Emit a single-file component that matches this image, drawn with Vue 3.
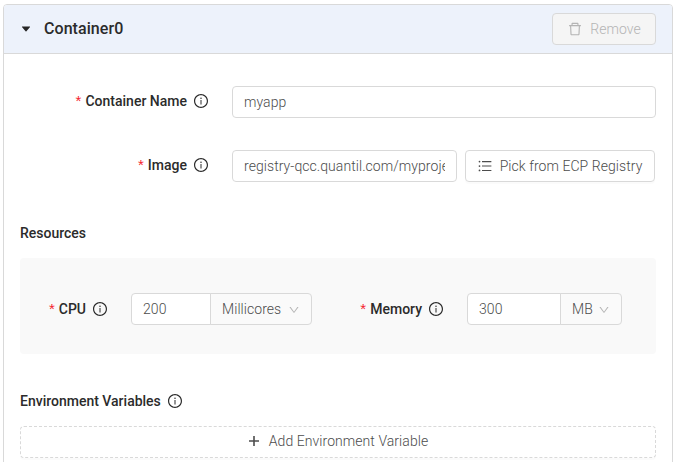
<script setup>
import { ref, h } from 'vue'

const name = ref('myapp')
const image = ref('registry-qcc.quantil.com/myproject/myapp')
const cpu = ref('200')
const memory = ref('300')

const InfoIcon = () =>
  h('svg', { class: 'info', viewBox: '0 0 1024 1024', width: 16, height: 16, fill: 'currentColor' }, [
    h('path', { d: 'M512 64C264.6 64 64 264.6 64 512s200.6 448 448 448 448-200.6 448-448S759.4 64 512 64zm0 820c-205.400 0-372-166.600-372-372s166.600-372 372-372 372 166.600 372 372-166.600 372-372 372z' }),
    h('path', { d: 'M464 336a48 48 0 1 0 96 0 48 48 0 1 0-96 0zm72 112h-48c-4.400 0-8 3.600-8 8v272c0 4.400 3.600 8 8 8h48c4.400 0 8-3.600 8-8V456c0-4.400-3.600-8-8-8z' })
  ])
const DownIcon = () =>
  h('svg', { viewBox: '0 0 1024 1024', width: 12, height: 12, fill: 'currentColor' }, [
    h('path', { d: 'M884 256h-75c-5.100 0-9.900 2.500-12.900 6.600L512 654.200 227.900 262.600c-3-4.100-7.800-6.600-12.900-6.600h-75c-6.500 0-10.300 7.400-6.500 12.700l352.600 486.100c12.800 17.600 39 17.600 51.700 0l352.600-486.100c3.900-5.300.1-12.700-6.400-12.700z' })
  ])
</script>

<template>
  <section class="panel">
    <header class="head">
      <svg class="caret" viewBox="0 0 1024 1024" width="12" height="12" fill="currentColor">
        <path d="M840.400 300H183.600c-19.700 0-30.700 20.800-18.500 35l328.400 380.800c9.400 10.900 27.500 10.900 37 0L858.900 335c12.200-14.200 1.200-35-18.500-35z" />
      </svg>
      <h2 class="title">Container0</h2>
      <button class="btn remove" disabled>
        <svg viewBox="0 0 1024 1024" width="16" height="16" fill="currentColor">
          <path d="M360 184h-8c4.400 0 8-3.600 8-8v8h304v-8c0 4.400 3.600 8 8 8h-8v72h72v-80c0-35.300-28.700-64-64-64H352c-35.300 0-64 28.700-64 64v80h72v-72zm504 72H160c-17.700 0-32 14.300-32 32v32c0 4.400 3.600 8 8 8h60.400l24.700 523c1.600 34.100 29.800 61 63.900 61h454c34.200 0 62.300-26.800 63.900-61l24.700-523H888c4.400 0 8-3.600 8-8v-32c0-17.700-14.300-32-32-32zM731.300 840H292.700l-24.200-512h487l-24.200 512z" />
        </svg>
        <span>Remove</span>
      </button>
    </header>

    <div class="body">
      <div class="row">
        <label class="label wide"><i class="req">*</i>Container Name<InfoIcon /></label>
        <input v-model="name" class="input grow" />
      </div>
      <div class="row second">
        <label class="label wide"><i class="req">*</i>Image<InfoIcon /></label>
        <input v-model="image" class="input image" />
        <button class="btn pick">
          <svg viewBox="0 0 1024 1024" width="16" height="16" fill="currentColor">
            <path d="M912 192H328c-4.400 0-8 3.600-8 8v56c0 4.400 3.600 8 8 8h584c4.400 0 8-3.600 8-8v-56c0-4.400-3.600-8-8-8zm0 284H328c-4.400 0-8 3.600-8 8v56c0 4.400 3.600 8 8 8h584c4.400 0 8-3.600 8-8v-56c0-4.400-3.600-8-8-8zm0 284H328c-4.400 0-8 3.600-8 8v56c0 4.400 3.600 8 8 8h584c4.400 0 8-3.600 8-8v-56c0-4.400-3.600-8-8-8zM104 228a56 56 0 1 0 112 0 56 56 0 1 0-112 0zm0 284a56 56 0 1 0 112 0 56 56 0 1 0-112 0zm0 284a56 56 0 1 0 112 0 56 56 0 1 0-112 0z" />
          </svg>
          <span>Pick from ECP Registry</span>
        </button>
      </div>

      <h3 class="label heading">Resources</h3>
      <div class="resources">
        <div class="field cpu">
          <label class="label"><i class="req">*</i>CPU<InfoIcon /></label>
          <div class="group">
            <input v-model="cpu" class="input" />
            <div class="addon"><span>Millicores</span><DownIcon /></div>
          </div>
        </div>
        <div class="field memory">
          <label class="label"><i class="req">*</i>Memory<InfoIcon /></label>
          <div class="group">
            <input v-model="memory" class="input" />
            <div class="addon"><span>MB</span><DownIcon /></div>
          </div>
        </div>
      </div>

      <h3 class="label heading env">Environment Variables<InfoIcon /></h3>
      <button class="btn add">
        <svg viewBox="0 0 16 16" width="16" height="16" fill="currentColor">
          <path d="M7.200 3h1.600v10H7.200zM3 7.200h10v1.600H3z" />
        </svg>
        <span>Add Environment Variable</span>
      </button>
    </div>
  </section>
</template>

<style>
body {
  background: #fff;
  overflow: hidden;
}
</style>

<style scoped>
.panel {
  box-sizing: border-box;
  width: 670px;
  height: 480px;
  margin: 4px 0 0 3px;
  border: 1px solid #d9d9d9;
  border-radius: 4px;
  overflow: hidden;
  font: 300 14px/22px Roboto, sans-serif;
  letter-spacing: 0.06px;
  color: #4c4c4c;
}
.panel * {
  box-sizing: border-box;
}
svg {
  display: block;
  flex: none;
}
.head {
  display: flex;
  align-items: center;
  height: 49px;
  padding: 0 16px;
  border-bottom: 1px solid #d9d9d9;
  background: #edf2fb;
}
.caret {
  color: #262626;
}
.title {
  margin: 0 auto 0 12px;
  font-size: 16px;
  font-weight: 500;
  line-height: 24px;
  color: #2b2b2b;
}
.btn {
  display: flex;
  align-items: center;
  justify-content: center;
  gap: 7px;
  height: 32px;
  padding: 0;
  border: 1px solid #d9d9d9;
  border-radius: 4px;
  background: #fff;
  box-shadow: 0 2px 0 rgba(0, 0, 0, 0.016);
  font: inherit;
  letter-spacing: inherit;
  color: #4c4c4c;
  white-space: nowrap;
}
.remove {
  width: 104px;
  background: #f5f5f5;
  box-shadow: none;
  color: #b4b4b4;
}
.body {
  padding: 32px 16px 0;
}
.row {
  display: flex;
}
.second {
  margin-top: 32px;
}
.label {
  display: flex;
  align-items: center;
  margin: 0;
  font-size: 14px;
  font-weight: 500;
  line-height: 22px;
  letter-spacing: 0;
  color: #2b2b2b;
  white-space: nowrap;
}
.wide {
  justify-content: flex-end;
  width: 189px;
  height: 30px;
  margin-right: 23px;
}
.req {
  margin: 0 4px 0 0;
  font: 15px/14px "Liberation Sans", sans-serif;
  color: #f5222d;
}
.info {
  margin-left: 6px;
}
.input {
  width: 0;
  height: 32px;
  padding: 0 11px;
  border: 1px solid #d9d9d9;
  border-radius: 4px;
  outline: 0;
  background: #fff;
  font: inherit;
  letter-spacing: inherit;
  color: #4c4c4c;
}
.grow {
  flex: 1;
}
.image {
  width: 225px;
}
.pick {
  width: 190px;
  margin-left: 8px;
  padding-right: 1px;
}
.heading {
  margin-top: 40px;
}
.resources {
  display: flex;
  height: 96px;
  margin-top: 14px;
  border-radius: 4px;
  background: #f9f9f9;
}
.field {
  display: flex;
  align-items: center;
  justify-content: flex-end;
  padding-top: 6px;
}
.cpu {
  width: 292px;
}
.memory {
  width: 310px;
}
.field .label {
  margin-right: 23px;
}
.group {
  display: flex;
}
.group .input {
  border-radius: 4px 0 0 4px;
}
.cpu .input {
  width: 80px;
}
.memory .input {
  width: 94px;
}
.addon {
  display: flex;
  align-items: center;
  justify-content: space-between;
  height: 32px;
  margin-left: -1px;
  padding: 0 11px;
  border: 1px solid #d9d9d9;
  border-radius: 0 4px 4px 0;
  background: #fafafa;
}
.addon svg {
  margin-top: 2px;
  color: #b4b4b4;
}
.cpu .addon {
  width: 102px;
}
.memory .addon {
  width: 62px;
}
.env {
  margin-top: 36px;
}
.add {
  width: 100%;
  margin-top: 14px;
  padding: 0 2px 2px 0;
  border-style: dashed;
}
</style>
